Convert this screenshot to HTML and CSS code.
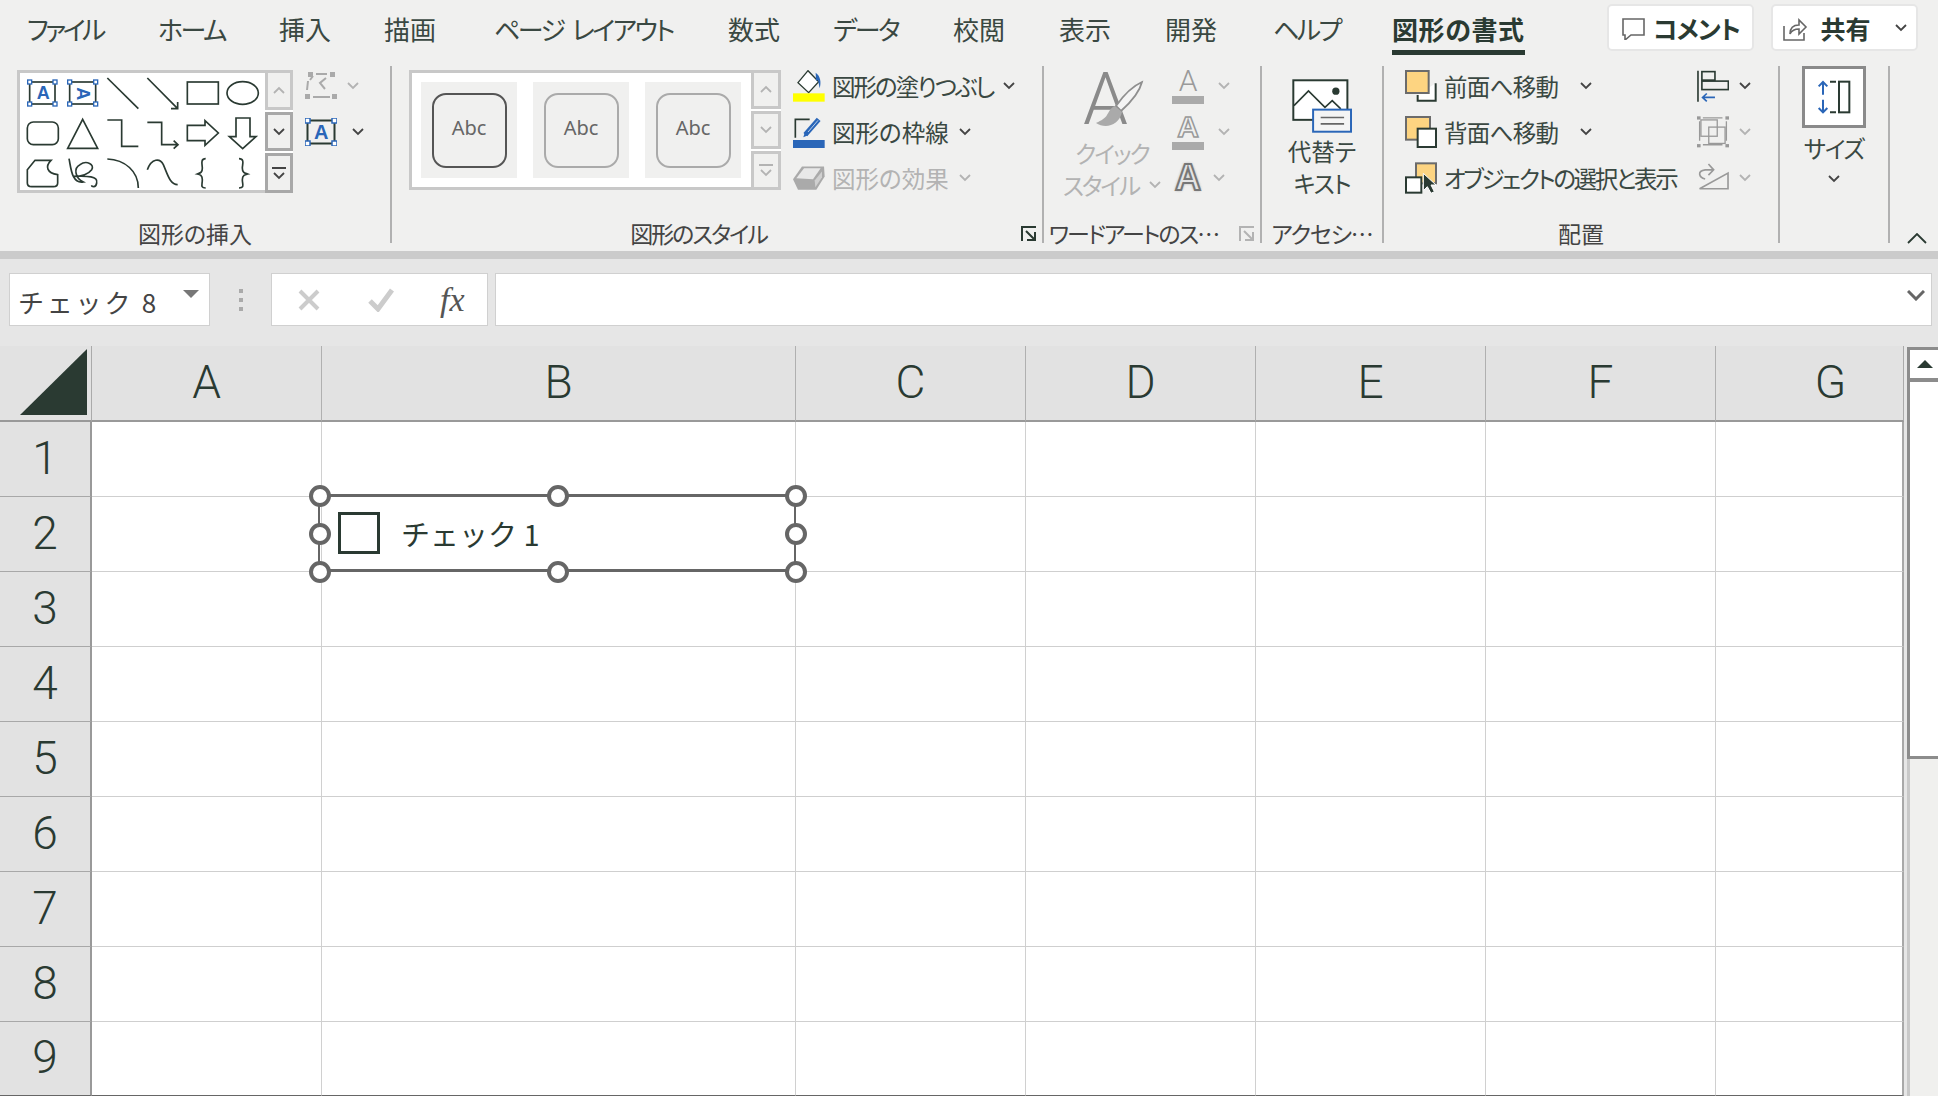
FILE: index.html
```html
<!DOCTYPE html>
<html lang="ja">
<head>
  <meta charset="UTF-8">
  <title>Excel - 図形の書式</title>
  <link rel="stylesheet" href="styles.css">
</head>
<body>
  <svg class="defs" width="0" height="0">
    <symbol id="chev" viewBox="0 0 12 8"><path d="M1 1l5 5 5-5" fill="none" stroke="currentColor" stroke-width="1.8"/></symbol>
    <symbol id="launch" viewBox="0 0 16 16"><path d="M1 15V1h14M5 5l9 9M14 6v8H6" fill="none" stroke="currentColor" stroke-width="2"/></symbol>
  </svg>

  <!-- tabs -->
  <nav class="tabbar">
    <div class="tab kana file-tab">ファイル</div>
    <div class="tab kana">ホーム</div>
    <div class="tab">挿入</div>
    <div class="tab">描画</div>
    <div class="tab kana">ページ レイアウト</div>
    <div class="tab">数式</div>
    <div class="tab kana">データ</div>
    <div class="tab">校閲</div>
    <div class="tab">表示</div>
    <div class="tab">開発</div>
    <div class="tab kana">ヘルプ</div>
    <div class="tab active">図形の書式</div>
    <div class="top-actions">
      <button class="top-btn comment-btn">
        <svg width="24" height="24" viewBox="0 0 24 24"><path d="M2 3h21v16H10l-6 5v-5H2z" fill="#fff" stroke="#666" stroke-width="1.6"/></svg>
        コメント
      </button>
      <button class="top-btn share-btn">
        <svg width="26" height="26" viewBox="0 0 26 26"><path d="M2 11v14h20v-7" fill="none" stroke="#666" stroke-width="1.6"/><path d="M8 19c0-7 4-9 9-9V5l7 7-7 7v-5c-4 0-7 1-9 5z" fill="#fff" stroke="#666" stroke-width="1.6"/></svg>
        <span class="share-label">共有</span>
        <svg class="chev share-chev"><use href="#chev"/></svg>
      </button>
    </div>
  </nav>

  <!-- ribbon -->
  <section class="ribbon">
    <div class="group g-insert">
      <div class="group-body">
        <div class="gallery">
          <div class="gallery-items">
            <svg width="245" height="120" viewBox="25 35 735 360" fill="none" stroke="#2a3a32" stroke-width="5">
              <rect x="54" y="62" width="76" height="66"/>
              <text class="ico-a" x="75" y="112">A</text>
              <rect class="hd" x="48" y="56" width="12" height="12"/><rect class="hd" x="124" y="56" width="12" height="12"/><rect class="hd" x="48" y="122" width="12" height="12"/><rect class="hd" x="124" y="122" width="12" height="12"/>
              <rect x="174" y="62" width="78" height="66"/>
              <text class="ico-a" transform="rotate(90 213 95)" x="196" y="112">A</text>
              <rect class="hd" x="168" y="56" width="12" height="12"/><rect class="hd" x="246" y="56" width="12" height="12"/><rect class="hd" x="168" y="122" width="12" height="12"/><rect class="hd" x="246" y="122" width="12" height="12"/>
              <path d="M287 50l93 92"/>
              <path d="M407 50l91 92M478 142h20v-20"/>
              <rect x="527" y="62" width="93" height="66"/>
              <ellipse cx="693" cy="95" rx="47" ry="34"/>
              <rect x="47" y="182" width="93" height="68" rx="18"/>
              <path d="M213 174l45 87h-90z"/>
              <path d="M287 176h43v79h50"/>
              <path d="M407 183h43v67h48M486 238l13 12-13 12"/>
              <path d="M527 192h53v-14l40 37-40 37v-14h-53z"/>
              <path d="M673 170h42v56h18l-40 36-40-36h20z"/>
              <path d="M47 325l23-28h48c-18 18-13 38 20 43v25q0 11-13 11H60q-13 0-13-11z"/>
              <path d="M172 292c6 28 8 76 43 70-25-12-30-42-10-52 20-15 45 0 35 15-15 20-45 20-55 20 25 0 77-5 70 20-3 17-15 10-15 7"/>
              <path d="M287 293c53 2 93 37 93 87"/>
              <path d="M407 325c13-35 38-35 48-15 13 30 20 60 43 60"/>
              <path d="M582 292c-17 0-10 18-10 28 0 15-7 15-15 18 8 2 15 4 15 17 0 15-7 25 10 25"/>
              <path d="M682 292c18 0 10 18 10 28 0 15 8 15 16 18-8 2-16 4-16 17 0 15 8 25-10 25"/>
            </svg>
          </div>
          <div class="gallery-scroll">
            <div class="gs-btn off"><svg class="chev up"><use href="#chev"/></svg></div>
            <div class="gs-btn"><svg class="chev"><use href="#chev"/></svg></div>
            <div class="gs-btn more"><i></i><svg class="chev"><use href="#chev"/></svg></div>
          </div>
        </div>
        <div class="side-col">
          <div class="side-row muted">
            <svg width="32" height="28" viewBox="0 0 32 28" fill="#aaa" stroke="none"><rect x="3" y="0" width="5" height="5"/><rect x="25" y="0" width="5" height="5"/><rect x="0" y="22" width="5" height="5"/><rect x="27" y="22" width="5" height="5"/><path d="M11 2h11M21 6l-6 5 5 6M3 9l-1 9M8 25h17M5 8l3-4" fill="none" stroke="#aaa" stroke-width="2"/></svg>
            <svg class="chev"><use href="#chev"/></svg>
          </div>
          <div class="side-row second">
            <svg width="32" height="28" viewBox="0 0 32 28" fill="none"><rect x="2.5" y="2.5" width="27" height="23" stroke="#2a3a32" stroke-width="2"/><text class="ico-a small" x="9" y="21">A</text><rect class="hd2" x="0" y="0" width="5" height="5"/><rect class="hd2" x="27" y="0" width="5" height="5"/><rect class="hd2" x="0" y="23" width="5" height="5"/><rect class="hd2" x="27" y="23" width="5" height="5"/></svg>
            <svg class="chev"><use href="#chev"/></svg>
          </div>
        </div>
      </div>
      <div class="label-row"><span class="glabel">図形の挿入</span></div>
    </div>

    <div class="group g-style">
      <div class="group-body">
        <div class="gallery style-gallery">
          <div class="gallery-items tiles">
            <div class="tile"><div class="tile-shape dark">Abc</div></div>
            <div class="tile"><div class="tile-shape">Abc</div></div>
            <div class="tile"><div class="tile-shape">Abc</div></div>
          </div>
          <div class="gallery-scroll">
            <div class="gs-btn off"><svg class="chev up"><use href="#chev"/></svg></div>
            <div class="gs-btn off"><svg class="chev"><use href="#chev"/></svg></div>
            <div class="gs-btn more off"><i></i><svg class="chev"><use href="#chev"/></svg></div>
          </div>
        </div>
        <div class="cmd-col">
          <div class="cmd">
            <svg width="32" height="32" viewBox="25 30 96 96"><path d="M40 68l30-36 32 33-30 33z" fill="#fff" stroke="#2a3a32" stroke-width="4"/><path d="M93 38c15 10 17 30 12 47l-5-25-6 2z" fill="#2a66b8"/><rect x="25" y="100" width="95" height="25" fill="#ffff00"/></svg>
            <span class="tight">図形の塗りつぶし</span><svg class="chev gap-s"><use href="#chev"/></svg>
          </div>
          <div class="cmd">
            <svg width="32" height="32" viewBox="25 168 96 96"><path d="M75 178H32v55" fill="none" stroke="#2a3a32" stroke-width="5"/><path d="M62 224l40-46" stroke="#2a66b8" stroke-width="15" fill="none"/><path d="M70 216l30-35" stroke="#bcd0ea" stroke-width="3" fill="none"/><path d="M56 232l4-14 10 8z" fill="#2a66b8"/><rect x="25" y="240" width="95" height="24" fill="#2a66b8"/></svg>
            <span>図形の枠線</span><svg class="chev gap-s"><use href="#chev"/></svg>
          </div>
          <div class="cmd muted">
            <svg width="32" height="27" viewBox="25 318 96 76"><path d="M25 358l27-38h66l2 30-25 40H40z" fill="#aaa"/><path d="M35 355l23-30h50l-23 33z" fill="#e8e8e8"/><path d="M90 362l22-27v17l-20 30z" fill="#d0d0d0"/></svg>
            <span>図形の効果</span><svg class="chev gap-s"><use href="#chev"/></svg>
          </div>
        </div>
      </div>
      <div class="label-row"><span class="glabel tight shifted">図形のスタイル</span><svg class="launcher"><use href="#launch"/></svg></div>
    </div>

    <div class="group g-word">
      <div class="group-body">
        <div class="quick muted">
          <svg width="62" height="56" viewBox="0 0 62 56">
            <text class="quick-a" x="0" y="46">A</text>
            <path d="M59 4C50 8 40 18 33 28l5 5C47 25 56 16 59 4z" fill="#f4f4f4" stroke="#8f8f8f" stroke-width="1.8"/>
            <path d="M32 28c-4 1-6 6-8 9-2 4-9 7-11 8 9 6 23 3 26-11z" fill="#aaa"/>
          </svg>
          <div class="quick-text tight">クイック</div>
          <div class="quick-text last"><span class="tight">スタイル</span><svg class="chev gap-s"><use href="#chev"/></svg></div>
        </div>
        <div class="wa-col muted">
          <div class="wa-row">
            <div class="wa-ico"><span class="wa-a">A</span><i></i></div>
            <svg class="chev"><use href="#chev"/></svg>
          </div>
          <div class="wa-row">
            <div class="wa-ico"><span class="wa-a outline">A</span><i></i></div>
            <svg class="chev"><use href="#chev"/></svg>
          </div>
          <div class="wa-row third">
            <div class="wa-ico"><span class="wa-a glow">A</span></div>
            <svg class="chev"><use href="#chev"/></svg>
          </div>
        </div>
      </div>
      <div class="label-row"><span class="glabel tight shifted">ワードアートのス…</span><svg class="launcher muted"><use href="#launch"/></svg></div>
    </div>

    <div class="group g-alt">
      <div class="group-body column">
        <svg class="alt-ico" width="60" height="54" viewBox="700 60 182 162">
          <rect x="704" y="63" width="164" height="120" fill="#fff" stroke="#2a3a32" stroke-width="6"/>
          <path d="M706 140l44-45 50 50 22-20 26 25" fill="none" stroke="#2a3a32" stroke-width="5"/>
          <circle cx="833" cy="96" r="11" fill="#2a3a32"/>
          <rect x="764" y="152" width="115" height="67" fill="#f4f4f4" stroke="#2a66b8" stroke-width="6"/>
          <path d="M787 176h71M787 195h71" stroke="#666" stroke-width="5"/>
        </svg>
        <div class="big-text">代替テ</div>
        <div class="big-text tight-s">キスト</div>
      </div>
      <div class="label-row"><span class="glabel tight-s">アクセシ…</span></div>
    </div>

    <div class="group g-arrange">
      <div class="group-body">
        <div class="cmd-col">
          <div class="cmd">
            <svg width="32" height="32" viewBox="30 30 96 96"><path d="M122 70v52H68v-17" fill="#fff" stroke="#2a3a32" stroke-width="6"/><rect x="33" y="33" width="68" height="66" fill="#fdd481" stroke="#6b6b6b" stroke-width="6"/></svg>
            <span class="tight-xs">前面へ移動</span><svg class="chev gap-l"><use href="#chev"/></svg>
          </div>
          <div class="cmd">
            <svg width="32" height="32" viewBox="30 168 96 96"><rect x="33" y="171" width="72" height="68" fill="#fdd481" stroke="#6b6b6b" stroke-width="6"/><rect x="68" y="206" width="55" height="55" fill="#fff" stroke="#2a3a32" stroke-width="6"/></svg>
            <span class="tight-xs">背面へ移動</span><svg class="chev gap-l"><use href="#chev"/></svg>
          </div>
          <div class="cmd">
            <svg width="32" height="32" viewBox="30 306 96 96"><rect x="63" y="310" width="60" height="60" fill="#fdd481" stroke="#6b6b6b" stroke-width="6"/><rect x="33" y="352" width="46" height="46" fill="#fff" stroke="#2a3a32" stroke-width="6"/><path d="M85 340v52l12-12 11 20 10-5-10-20h15z" fill="#2a3a32" stroke="#fff" stroke-width="3"/></svg>
            <span class="tight-l">オブジェクトの選択と表示</span>
          </div>
        </div>
        <div class="align-col">
          <div class="side-row">
            <svg width="32" height="32" viewBox="50 208 98 98" fill="none" stroke="#2a3a32" stroke-width="5"><path d="M53 210v95"/><rect x="65" y="213" width="40" height="26"/><rect x="65" y="242" width="81" height="26"/><path d="M105 292H67M80 280l-13 12 13 12" stroke="#2a66b8"/></svg>
            <svg class="chev"><use href="#chev"/></svg>
          </div>
          <div class="side-row muted">
            <svg width="32" height="32" viewBox="50 346 98 98" fill="none" stroke="#999" stroke-width="4"><path d="M58 362v60M140 362v60M68 352h60M68 434h60"/><rect x="62" y="358" width="50" height="50"/><rect x="86" y="380" width="50" height="50"/><rect x="50" y="347" width="11" height="10" fill="#999" stroke="none"/><rect x="137" y="347" width="11" height="10" fill="#999" stroke="none"/><rect x="50" y="432" width="11" height="10" fill="#999" stroke="none"/><rect x="137" y="432" width="11" height="10" fill="#999" stroke="none"/></svg>
            <svg class="chev"><use href="#chev"/></svg>
          </div>
          <div class="side-row muted">
            <svg width="32" height="32" viewBox="50 484 98 98" fill="none" stroke="#999" stroke-width="5"><path d="M58 566l87-48v48z"/><path d="M75 536c-20-5-25-25 0-28h25M85 490l16 18-16 16"/></svg>
            <svg class="chev"><use href="#chev"/></svg>
          </div>
        </div>
      </div>
      <div class="label-row"><span class="glabel">配置</span></div>
    </div>

    <div class="group g-size">
      <div class="group-body column">
        <div class="size-btn">
          <svg width="36" height="36" viewBox="405 240 108 100" fill="none" stroke-width="6"><path d="M426 283v-38M413 258l13-13 13 13M426 298v38M413 323l13 13 13-13" stroke="#2a66b8"/><path d="M447 244h18M447 336h18" stroke="#2a3a32"/><rect x="474" y="244" width="31" height="92" stroke="#2a3a32"/></svg>
        </div>
        <div class="big-text size-text tight-s">サイズ</div>
        <svg class="chev size-chev"><use href="#chev"/></svg>
      </div>
    </div>

    <div class="collapse">
      <svg width="20" height="11" viewBox="0 0 20 11"><path d="M1 10l9-9 9 9" fill="none" stroke="#2a3a32" stroke-width="1.8"/></svg>
    </div>
  </section>
  <div class="ribbon-edge"></div>

  <!-- formula bar -->
  <div class="formula-bar">
    <div class="name-box"><span>チェック 8</span><i class="name-arrow"></i></div>
    <div class="fb-dots"><i></i><i></i><i></i></div>
    <div class="fb-btns">
      <svg width="24" height="22" viewBox="0 0 24 22"><path d="M3 2l18 18M21 2L3 20" stroke="#ccc" stroke-width="4"/></svg>
      <svg width="26" height="24" viewBox="0 0 26 24"><path d="M2 13l8 8L24 2" fill="none" stroke="#ccc" stroke-width="5"/></svg>
      <span class="fx">fx</span>
    </div>
    <div class="fb-input">
      <svg width="18" height="11" viewBox="0 0 18 11"><path d="M1 1l8 8 8-8" fill="none" stroke="#666" stroke-width="3"/></svg>
    </div>
  </div>

  <!-- sheet -->
  <div class="sheet-wrap">
    <div class="sheet">
      <div class="corner"><svg width="67" height="66" viewBox="0 0 67 66"><path d="M67 0v66H0z" fill="#2a3a32"/></svg></div>
      <div class="col-h">A</div><div class="col-h">B</div><div class="col-h">C</div><div class="col-h">D</div><div class="col-h">E</div><div class="col-h">F</div><div class="col-h">G</div>

      <div class="row-h">1</div><div class="c"></div><div class="c"></div><div class="c"></div><div class="c"></div><div class="c"></div><div class="c"></div><div class="c"></div>
      <div class="row-h">2</div><div class="c"></div><div class="c"></div><div class="c"></div><div class="c"></div><div class="c"></div><div class="c"></div><div class="c"></div>
      <div class="row-h">3</div><div class="c"></div><div class="c"></div><div class="c"></div><div class="c"></div><div class="c"></div><div class="c"></div><div class="c"></div>
      <div class="row-h">4</div><div class="c"></div><div class="c"></div><div class="c"></div><div class="c"></div><div class="c"></div><div class="c"></div><div class="c"></div>
      <div class="row-h">5</div><div class="c"></div><div class="c"></div><div class="c"></div><div class="c"></div><div class="c"></div><div class="c"></div><div class="c"></div>
      <div class="row-h">6</div><div class="c"></div><div class="c"></div><div class="c"></div><div class="c"></div><div class="c"></div><div class="c"></div><div class="c"></div>
      <div class="row-h">7</div><div class="c"></div><div class="c"></div><div class="c"></div><div class="c"></div><div class="c"></div><div class="c"></div><div class="c"></div>
      <div class="row-h">8</div><div class="c"></div><div class="c"></div><div class="c"></div><div class="c"></div><div class="c"></div><div class="c"></div><div class="c"></div>
      <div class="row-h">9</div><div class="c"></div><div class="c"></div><div class="c"></div><div class="c"></div><div class="c"></div><div class="c"></div><div class="c"></div>

      <!-- selected check box control -->
      <div class="control">
        <div class="check-box"></div>
        <div class="check-label">チェック 1</div>
        <i class="handle tl"></i><i class="handle tm"></i><i class="handle tr"></i>
        <i class="handle ml"></i><i class="handle mr"></i>
        <i class="handle bl"></i><i class="handle bm"></i><i class="handle br"></i>
      </div>
    </div>

    <div class="scrollbar">
      <div class="sb-arrow"><i></i></div>
      <div class="sb-thumb"></div>
    </div>
  </div>
</body>
</html>
```

FILE: styles.css
```css
* {
  box-sizing: border-box;
}

html, body {
  margin: 0;
  padding: 0;
}

body {
  width: 1938px;
  height: 1096px;
  overflow: hidden;
  background: #e6e6e6;
  color: #3a4842;
  font-family: "Noto Sans CJK JP", "Liberation Sans", sans-serif;
  font-feature-settings: "palt";
}

.defs {
  position: absolute;
}

.chev {
  width: 12px;
  height: 8px;
  flex: none;
  color: #444;
}

.chev.up {
  transform: rotate(180deg);
}

.muted {
  color: #b3b3b3;
}

.muted .chev {
  color: #b3b3b3;
}

.tight {
  letter-spacing: -2px;
}

.tight-l {
  letter-spacing: -2.4px;
}

.tight-s {
  letter-spacing: -1.2px;
}

.tight-xs {
  letter-spacing: -0.7px;
}

/* tabs */
.tabbar {
  display: grid;
  grid-template-columns: 131px 121px 105px 110px 234px 105px 120px 106px 106px 108px 119px auto 1fr;
  height: 60px;
  padding-left: 27px;
  background: #f0f0ef;
}

.tab {
  height: 55px;
  padding-top: 10px;
  font-size: 26px;
  line-height: 38px;
  white-space: nowrap;
}

.tab.kana {
  letter-spacing: -2.5px;
  word-spacing: 5px;
}

.tab.file-tab {
  letter-spacing: -3.6px;
}

.tab.active {
  font-weight: 700;
  letter-spacing: 0.6px;
  color: #2a3a32;
  border-bottom: 5px solid #2a3a32;
}

.top-actions {
  display: flex;
  justify-content: flex-end;
  gap: 17px;
  margin-right: 20px;
  padding-top: 4px;
}

.top-btn {
  display: flex;
  align-items: center;
  justify-content: center;
  gap: 8px;
  width: 147px;
  height: 47px;
  padding: 0;
  background: #fff;
  border: 2px solid #e6e6e6;
  border-radius: 5px;
  font-family: inherit;
  font-feature-settings: inherit;
  font-size: 25px;
  font-weight: 700;
  color: #2a3a32;
}

.comment-btn {
  letter-spacing: -1px;
}

.share-label {
  margin-left: 4px;
}

.share-chev {
  margin-left: 16px;
}

/* ribbon */
.ribbon {
  display: flex;
  height: 191px;
  padding-top: 6px;
  background: #f0f0ef;
}

.group {
  display: flex;
  flex-direction: column;
  height: 177px;
  border-right: 2px solid #b1b1b1;
}

.g-insert { width: 392px; }
.g-style { width: 652px; }
.g-word { width: 218px; }
.g-alt { width: 122px; }
.g-arrange { width: 396px; }
.g-size { width: 110px; }

.group-body {
  display: flex;
  flex: 1;
}

.group-body.column {
  flex-direction: column;
  align-items: center;
}

.label-row {
  display: flex;
  align-items: center;
  height: 18px;
  padding-bottom: 2px;
}

.glabel {
  flex: 1;
  font-size: 23px;
  line-height: 18px;
  text-align: center;
  white-space: nowrap;
  color: #444;
}

.glabel.shifted {
  padding-right: 16px;
}

.launcher {
  width: 16px;
  height: 16px;
  flex: none;
  margin-right: 5px;
  margin-bottom: -2px;
  color: #2a3a32;
}

.launcher.muted {
  color: #b3b3b3;
}

.g-insert .group-body,
.g-style .group-body {
  padding-left: 17px;
}

.gallery {
  display: flex;
  width: 276px;
  height: 123px;
  margin-top: 4px;
  background: #fff;
  border: 3px solid #c8c8c8;
  border-right: none;
}

.gallery-items {
  flex: 1;
  line-height: 0;
}

.gallery-scroll {
  display: flex;
  flex-direction: column;
  width: 30px;
  margin-top: -3px;
  margin-bottom: -3px;
}

.gs-btn {
  display: flex;
  flex-direction: column;
  align-items: center;
  justify-content: center;
  gap: 3px;
  flex: 1;
  background: #f0f0ef;
  border: 3px solid #a8a8a8;
}

.gs-btn + .gs-btn {
  margin-top: 2px;
}

.gs-btn.off {
  border-color: #c8c8c8;
}

.gs-btn.off .chev {
  color: #b3b3b3;
}

.gs-btn.more i {
  width: 14px;
  height: 2px;
  background: #444;
}

.gs-btn.more.off i {
  background: #b3b3b3;
}

.ico-a {
  font-family: "Liberation Sans", sans-serif;
  font-size: 54px;
  font-weight: 700;
  fill: #2a66b8;
  stroke: none;
}

.ico-a.small {
  font-size: 20px;
}

.hd {
  fill: #fff;
  stroke: #2a66b8;
  stroke-width: 4;
}

.hd2 {
  fill: #fff;
  stroke: #2a66b8;
  stroke-width: 1.5;
}

.side-col {
  display: flex;
  flex-direction: column;
  margin-left: 12px;
}

.side-row {
  display: flex;
  align-items: center;
  gap: 10px;
  height: 40px;
}

.side-row + .side-row {
  margin-top: 6px;
}

.side-row.second {
  gap: 15px;
}

/* style gallery */
.style-gallery {
  width: 372px;
  height: 120px;
}

.tiles {
  display: flex;
  gap: 16px;
  padding: 9px 0 0 9px;
}

.tile {
  display: flex;
  align-items: center;
  justify-content: center;
  width: 96px;
  height: 96px;
  background: #f0f0ef;
}

.tile-shape {
  display: flex;
  align-items: center;
  justify-content: center;
  width: 75px;
  height: 75px;
  padding-bottom: 4px;
  border: 2px solid #aaa;
  border-radius: 14px;
  font-family: "Noto Sans", sans-serif;
  font-size: 20px;
  line-height: 1;
  color: #666;
}

.tile-shape.dark {
  border-color: #555;
}

/* commands */
.cmd-col {
  display: flex;
  flex-direction: column;
  gap: 6px;
}

.g-style .cmd-col {
  margin-left: 12px;
}

.cmd {
  display: flex;
  align-items: center;
  height: 40px;
  font-size: 23.5px;
  white-space: nowrap;
}

.cmd > svg:first-child {
  flex: none;
  width: 32px;
  margin-right: 7px;
}

.gap-s {
  margin-left: 10px;
}

.gap-l {
  margin-left: 22px;
}

/* word art */
.g-word .group-body {
  padding-left: 14px;
}

.quick {
  display: flex;
  flex-direction: column;
  align-items: center;
  width: 108px;
  padding-top: 12px;
}

.quick svg {
  margin-left: 4px;
  overflow: visible;
}

.quick svg.chev {
  margin-left: 10px;
}

.quick-a {
  font-family: "Roboto", sans-serif;
  font-weight: 300;
  font-size: 72px;
  fill: #8a8a8a;
}

.quick-text {
  height: 32px;
  font-size: 23.5px;
  line-height: 32px;
  white-space: nowrap;
}

.quick svg + .quick-text {
  margin-top: 3px;
}

.quick-text.last {
  display: flex;
  align-items: center;
}

.wa-col {
  display: flex;
  flex-direction: column;
  gap: 6px;
  margin-left: 6px;
}

.wa-row {
  display: flex;
  align-items: center;
  gap: 14px;
  height: 40px;
}

.wa-row.third {
  gap: 9px;
}

.wa-ico {
  display: flex;
  flex-direction: column;
  align-items: center;
  width: 32px;
}

.wa-a {
  height: 24px;
  font-family: "Roboto", sans-serif;
  font-size: 30px;
  font-weight: 300;
  line-height: 24px;
  color: #9a9a9a;
}

.wa-a.outline {
  font-family: "Liberation Sans", sans-serif;
  font-weight: 700;
  color: #f0f0ef;
  -webkit-text-stroke: 1.5px #999;
}

.wa-a.glow {
  height: 30px;
  font-family: "Liberation Sans", sans-serif;
  font-size: 36px;
  line-height: 30px;
  font-weight: 700;
  color: #e4e4e4;
  -webkit-text-stroke: 2px #777;
  text-shadow: 0 0 3px #aaa, 0 0 3px #aaa;
}

.wa-ico i {
  width: 32px;
  height: 8px;
  margin-top: 3px;
  background: #aaa;
}

/* alt text + size */
.alt-ico {
  flex: none;
  margin-top: 13px;
  margin-bottom: 2px;
}

.big-text {
  height: 32px;
  font-size: 23.5px;
  line-height: 32px;
  white-space: nowrap;
}

.g-arrange .group-body {
  padding-left: 21px;
}

.align-col {
  display: flex;
  flex-direction: column;
  margin-left: auto;
  margin-right: 27px;
}

.size-btn {
  display: flex;
  align-items: center;
  justify-content: center;
  width: 64px;
  height: 62px;
  background: #fff;
  border: 3px solid #8a8a8a;
}

.size-text {
  margin-top: 4px;
}

.size-chev {
  margin-top: 11px;
}

.collapse {
  flex: 1;
  padding: 167px 0 0 17px;
  line-height: 0;
}

.ribbon-edge {
  height: 8px;
  background: #cbcbcb;
}

/* formula bar */
.formula-bar {
  display: flex;
  align-items: flex-start;
  height: 87px;
  padding: 14px 6px 0 9px;
}

.name-box {
  display: flex;
  align-items: center;
  width: 201px;
  height: 53px;
  padding: 3px 0 0 8px;
  background: #fff;
  border: 1px solid #d0d0d0;
  font-size: 26px;
  letter-spacing: 2.8px;
  font-feature-settings: normal;
  color: #444;
}

.name-arrow {
  width: 0;
  height: 0;
  margin: -15px 10px 0 auto;
  border-left: 8px solid transparent;
  border-right: 8px solid transparent;
  border-top: 8px solid #777;
}

.fb-dots {
  display: flex;
  flex-direction: column;
  gap: 5px;
  width: 61px;
  padding: 16px 0 0 29px;
}

.fb-dots i {
  width: 4px;
  height: 4px;
  background: #aaa;
}

.fb-btns {
  display: flex;
  align-items: center;
  width: 217px;
  height: 53px;
  padding-left: 25px;
  background: #fff;
  border: 1px solid #d0d0d0;
}

.fb-btns svg + svg {
  margin-left: 47px;
}

.fx {
  margin-left: 46px;
  font-family: "Liberation Serif", serif;
  font-size: 34px;
  font-style: italic;
  color: #555;
}

.fb-input {
  display: flex;
  align-items: center;
  justify-content: flex-end;
  flex: 1;
  height: 53px;
  margin-left: 7px;
  padding: 0 6px 8px 0;
  background: #fff;
  border: 1px solid #d0d0d0;
}

/* sheet */
.sheet-wrap {
  display: flex;
  height: 750px;
}

.sheet {
  position: relative;
  display: grid;
  grid-template-columns: 92px 230px 474px 230px 230px 230px 230px 188px;
  grid-template-rows: 76px repeat(8, 75px) 74px;
  width: 1904px;
  background: #fff;
}

.corner {
  display: flex;
  align-items: flex-end;
  justify-content: flex-end;
  padding: 0 4px 5px 0;
  background: #e2e2e2;
  border-right: 1px solid #aaa;
  border-bottom: 2px solid #999;
}

.col-h {
  display: flex;
  align-items: center;
  justify-content: center;
  padding-bottom: 2px;
  background: #e2e2e2;
  border-right: 1px solid #b0b0b0;
  border-bottom: 2px solid #999;
  font-family: "Roboto", sans-serif;
  font-weight: 300;
  font-size: 46px;
  color: #2a3a32;
}

.col-h:nth-child(8) {
  padding-left: 42px;
  border-right: 1px solid #aaa;
}

.row-h {
  display: flex;
  align-items: center;
  justify-content: center;
  padding-bottom: 3px;
  background: #e2e2e2;
  border-right: 2px solid #999;
  border-bottom: 1px solid #a8a8a8;
  font-family: "Roboto", sans-serif;
  font-weight: 300;
  font-size: 46px;
  color: #2a3a32;
}

.c {
  border-right: 1px solid #d0d0d0;
  border-bottom: 1px solid #cfcfcf;
}

.c:nth-child(8n) {
  border-right: 2px solid #a8a8a8;
}

.c:nth-child(n+73),
.row-h:nth-child(n+73) {
  border-bottom-color: #666;
}

.control {
  position: absolute;
  left: 318px;
  top: 148px;
  display: flex;
  align-items: center;
  width: 478px;
  height: 78px;
  padding-left: 18px;
  border: 2px solid #666;
  border-top-width: 3px;
  border-bottom-width: 3px;
}

.check-box {
  width: 42px;
  height: 42px;
  background: #fff;
  border: 3px solid #2a3a32;
}

.check-label {
  margin-left: 21px;
  font-size: 29px;
  font-weight: 400;
  color: #2a3a32;
  font-feature-settings: normal;
}

.handle {
  position: absolute;
  width: 22px;
  height: 22px;
  background: #fff;
  border: 4px solid #666;
  border-radius: 50%;
}

.tl, .ml, .bl { left: -11px; }
.tm, .bm { left: 227px; }
.tr, .mr, .br { right: -13px; }
.tl, .tm, .tr { top: -12px; }
.ml, .mr { top: 26px; }
.bl, .bm, .br { bottom: -14px; }

/* scrollbar */
.scrollbar {
  display: flex;
  flex-direction: column;
  width: 31px;
  height: 749px;
  margin: 1px 0 0 3px;
  background: #f0f0ee;
  border-left: 3px solid #c8c8c8;
}

.sb-arrow {
  display: flex;
  align-items: center;
  justify-content: center;
  height: 35px;
  margin-left: -3px;
  padding-left: 2px;
  background: #fff;
  border-top: 3px solid #8c8c8c;
  border-left: 3px solid #8c8c8c;
  border-bottom: 4px solid #8c8c8c;
}

.sb-arrow i {
  width: 0;
  height: 0;
  border-left: 8px solid transparent;
  border-right: 8px solid transparent;
  border-bottom: 8px solid #2a3a32;
}

.sb-thumb {
  height: 377px;
  margin-left: -3px;
  background: #fff;
  border-left: 3px solid #8c8c8c;
  border-bottom: 3px solid #8c8c8c;
}
```
